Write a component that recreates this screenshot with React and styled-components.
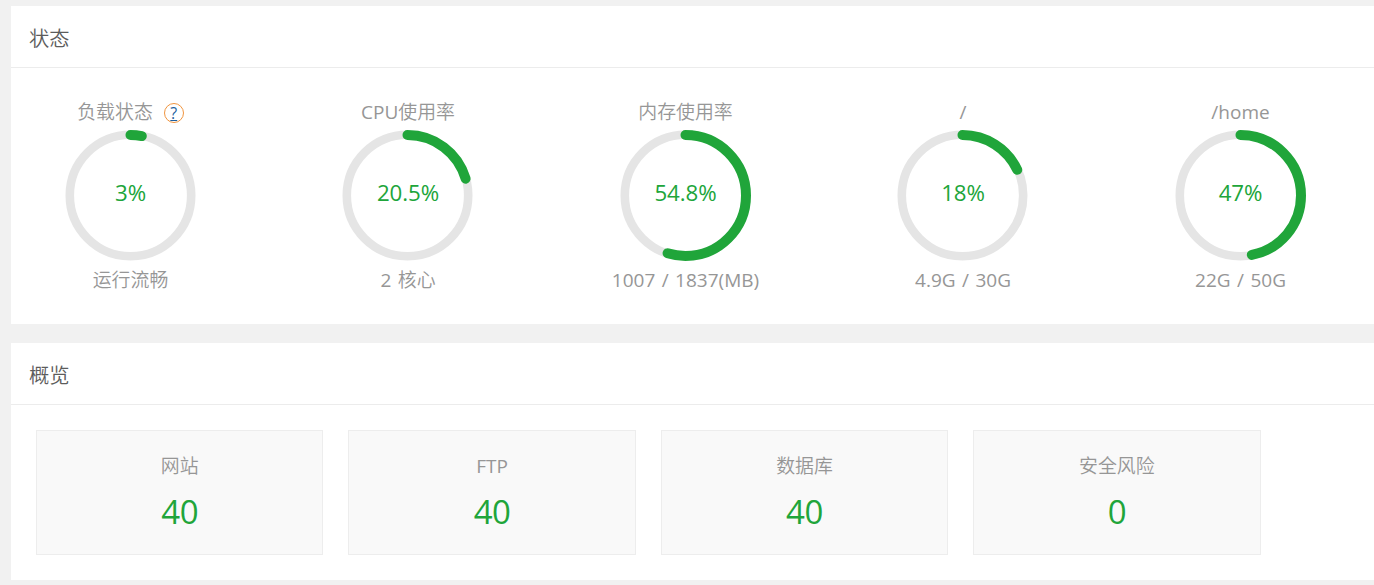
import React from 'react'
import styled, { createGlobalStyle } from 'styled-components'

const GREEN = '#20a53a'

const GlobalStyle = createGlobalStyle`
  body {
    margin: 0;
    background: #f1f1f1;
    font-family: 'Open Sans', 'Noto Sans CJK SC', sans-serif;
    overflow: hidden;
  }
`

const Page = styled.main`
  display: flex;
  flex-direction: column;
  gap: 19px;
  height: 585px;
  padding: 6px 0 0 11px;
  box-sizing: border-box;
  overflow: hidden;
`

const Panel = styled.section`
  flex: none;
  height: ${p => p.$height}px;
  background: #fff;
`

const PanelTitle = styled.h3`
  height: 61px;
  margin: 0;
  padding-left: 18px;
  border-bottom: 1px solid #ececec;
  color: #5c5c5c;
  font-size: 20.3px;
  font-weight: 350;
  line-height: 64px;
`

const Gauges = styled.ul`
  display: grid;
  grid-template-columns: repeat(5, 239px);
  column-gap: 38.5px;
  margin: 0;
  padding: 30px 0 0;
  list-style: none;
`

const Gauge = styled.li`
  display: flex;
  flex-direction: column;
  align-items: center;
`

const Label = styled.div`
  display: flex;
  align-items: center;
  height: 28px;
  color: #969696;
  font-size: 18.9px;
  font-weight: 350;
  line-height: 29px;
  white-space: pre;
`

const GaugeNote = styled(Label)`
  margin-top: 5px;
`

const Latin = styled.span`
  font-size: 19px;
  font-weight: 400;
  word-spacing: 1.5px;
`

const Help = styled.a`
  display: flex;
  justify-content: center;
  width: 18px;
  height: 18px;
  margin: 2px 0 0 11px;
  border: 1px solid #f0953f;
  border-radius: 50%;
  color: #1f5f9f;
  font-size: 16px;
  font-weight: 400;
  line-height: 19px;
  text-decoration: underline;
`

const Dial = styled.div`
  display: grid;
  place-items: center;
  width: 132px;
  height: 132px;
  margin-top: 3px;

  > * {
    grid-area: 1 / 1;
  }
`

const Percent = styled.span`
  margin-top: -4px;
  color: ${GREEN};
  font-size: 22.3px;
  line-height: 30px;
  letter-spacing: -0.1px;
`

const Cards = styled.ul`
  display: grid;
  grid-template-columns: repeat(4, 287.4px);
  column-gap: 25px;
  margin: 0;
  padding: 25px;
  list-style: none;
`

const Card = styled.li`
  display: flex;
  flex-direction: column;
  align-items: center;
  height: 125px;
  padding-top: 21px;
  box-sizing: border-box;
  border: 1px solid #ededed;
  background: #f9f9f9;
`

const Count = styled.span`
  margin-top: 9px;
  color: ${GREEN};
  font-size: 33px;
  line-height: 46px;
  letter-spacing: -0.5px;
`

const gauges = [
  { title: '负载状态', percent: 3, note: '运行流畅', help: true },
  { title: 'CPU使用率', percent: 20.5, note: '2 核心' },
  { title: '内存使用率', percent: 54.8, note: '1007 / 1837(MB)' },
  { title: '/', percent: 18, note: '4.9G / 30G' },
  { title: '/home', percent: 47, note: '22G / 50G' },
]

const cards = [
  { title: '网站', count: 40 },
  { title: 'FTP', count: 40 },
  { title: '数据库', count: 40 },
  { title: '安全风险', count: 0 },
]

// latin runs are set a little heavier than the chinese ones
const renderText = (text) => (
  <span>
    { text.split(/([\x20-\x7e]+)/).filter(Boolean).map(run => (
      /^[\x20-\x7e]/.test(run) ? <Latin key={run}>{ run }</Latin> : run
    )) }
  </span>
)

const Ring = ({ percent }) => (
  <svg width='132' height='132' viewBox='-65.5 -66.5 132 132'>
    <circle r='60.7' fill='none' stroke='#e5e5e5' strokeWidth='8.6' />
    <circle
      r               = '60.5'
      fill            = 'none'
      stroke          = {GREEN}
      strokeWidth     = '10'
      strokeLinecap   = 'round'
      pathLength      = '100'
      strokeDasharray = {`${percent} 100`}
      transform       = 'rotate(-90)'
    />
  </svg>
)

const App = () => (
  <Page>
    <GlobalStyle />
    <Panel $height={318}>
      <PanelTitle>状态</PanelTitle>
      <Gauges>
        { gauges.map(gauge => (
          <Gauge key={gauge.title}>
            <Label>
              { renderText(gauge.title) }
              { gauge.help && <Help>?</Help> }
            </Label>
            <Dial>
              <Ring percent={gauge.percent} />
              <Percent>{ gauge.percent }%</Percent>
            </Dial>
            <GaugeNote>{ renderText(gauge.note) }</GaugeNote>
          </Gauge>
        )) }
      </Gauges>
    </Panel>

    <Panel $height={237}>
      <PanelTitle>概览</PanelTitle>
      <Cards>
        { cards.map(card => (
          <Card key={card.title}>
            <Label>{ renderText(card.title) }</Label>
            <Count>{ card.count }</Count>
          </Card>
        )) }
      </Cards>
    </Panel>
  </Page>
)

export default App
